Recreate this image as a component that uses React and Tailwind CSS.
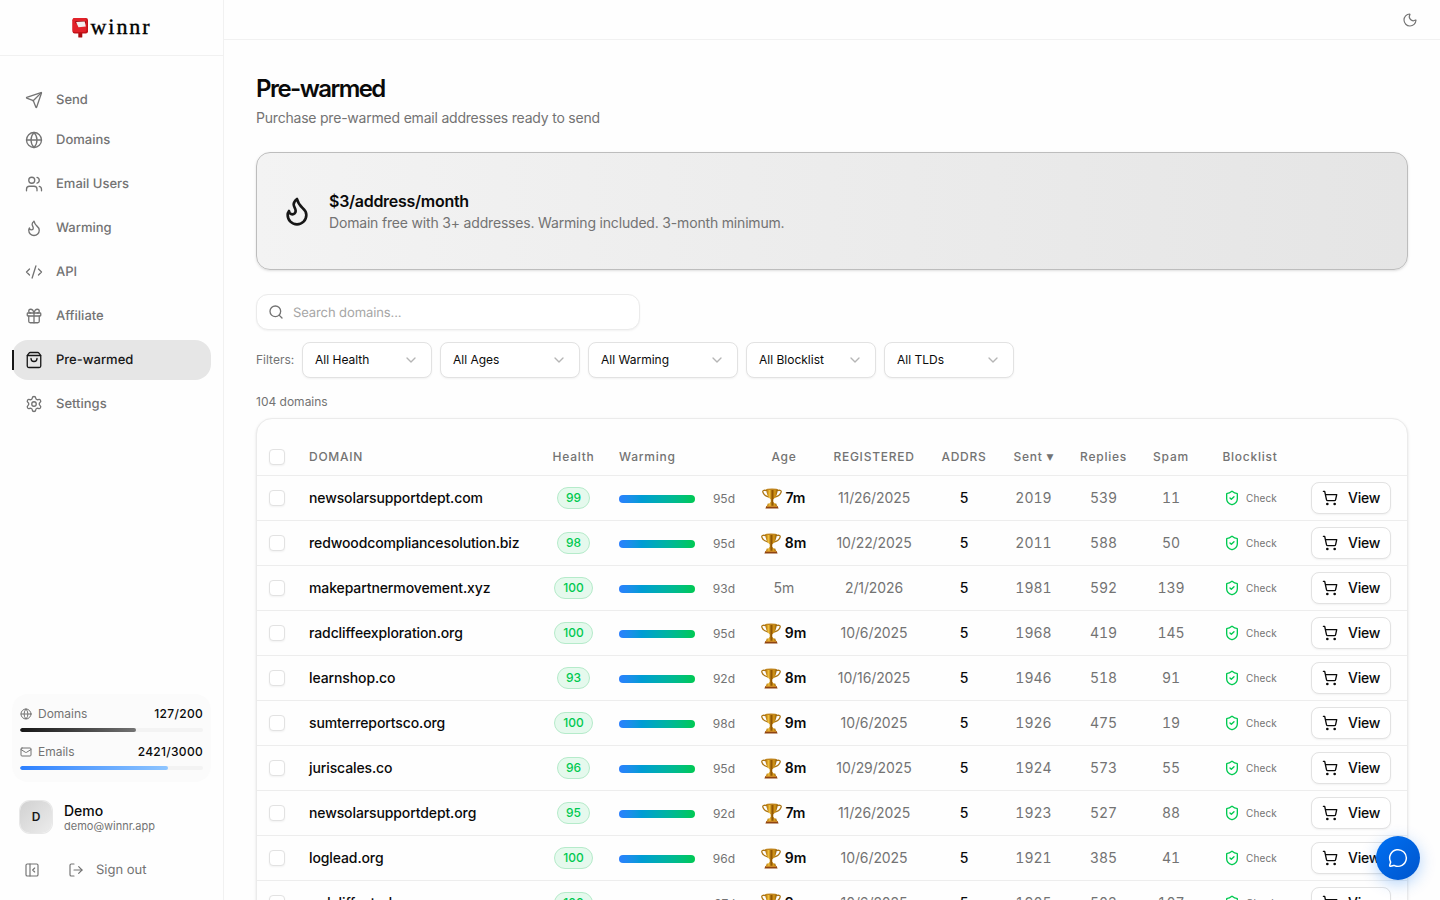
import React from "react";
import {
  Send, Globe, Users, Flame, CodeXml, Gift, ShoppingBag, Settings, Mail,
  PanelLeftClose, LogOut, Moon, Search, ChevronDown, ShieldCheck, ShoppingCart, MessageCircle,
} from "lucide-react";

const nav = [
  { label: "Send", icon: Send, gap: "" },
  { label: "Domains", icon: Globe, gap: "" },
  { label: "Email Users", icon: Users, gap: "mt-1" },
  { label: "Warming", icon: Flame, gap: "mt-1" },
  { label: "API", icon: CodeXml, gap: "mt-1" },
  { label: "Affiliate", icon: Gift, gap: "mt-1" },
  { label: "Pre-warmed", icon: ShoppingBag, gap: "mt-1", active: true },
  { label: "Settings", icon: Settings, gap: "mt-1" },
];

const filters = [
  ["All Health", "w-[130px]"],
  ["All Ages", "w-[140px]"],
  ["All Warming", "w-[150px]"],
  ["All Blocklist", "w-[130px]"],
  ["All TLDs", "w-[130px]"],
];

const rows = [
  ["newsolarsupportdept.com", 99, "95d", "7m", "11/26/2025", 5, 2019, 539, 11],
  ["redwoodcompliancesolution.biz", 98, "95d", "8m", "10/22/2025", 5, 2011, 588, 50],
  ["makepartnermovement.xyz", 100, "93d", "5m", "2/1/2026", 5, 1981, 592, 139],
  ["radcliffeexploration.org", 100, "95d", "9m", "10/6/2025", 5, 1968, 419, 145],
  ["learnshop.co", 93, "92d", "8m", "10/16/2025", 5, 1946, 518, 91],
  ["sumterreportsco.org", 100, "98d", "9m", "10/6/2025", 5, 1926, 475, 19],
  ["juriscales.co", 96, "95d", "8m", "10/29/2025", 5, 1924, 573, 55],
  ["newsolarsupportdept.org", 95, "92d", "7m", "11/26/2025", 5, 1923, 527, 88],
  ["loglead.org", 100, "96d", "9m", "10/6/2025", 5, 1921, 385, 41],
  ["radcliffestud.org", 100, "97d", "9m", "10/6/2025", 5, 1905, 503, 107],
];

const grid =
  "grid grid-cols-[40px_244px_65px_142px_72px_108px_72px_67px_73px_62px_96px_109px] items-center";

function Trophy() {
  return (
    <svg width="20" height="21" viewBox="0 0 20 21" className="-ml-px shrink-0">
      <defs>
        <linearGradient id="cup" x1="0" x2="1" y1="0" y2="0">
          <stop offset="0" stopColor="#a86a05" />
          <stop offset="0.3" stopColor="#f5c33c" />
          <stop offset="0.52" stopColor="#8a4f00" />
          <stop offset="0.75" stopColor="#d89a1a" />
          <stop offset="1" stopColor="#8a5604" />
        </linearGradient>
      </defs>
      <path d="M5 2.600C1.600 1.700.2 2.600 1 4.600c.9 2.300 3.200 4 6.200 4.600M15 2.600c3.400-.9 4.800 0 4 2-.9 2.300-3.200 4-6.200 4.600" fill="none" stroke="#ad7614" strokeWidth="1.300" />
      <path d="M4.300 1h11.400c0 4.600-1.600 8.300-4.400 10.400v2.400l1.600 2.200H7.100l1.600-2.200v-2.400C5.900 9.300 4.300 5.600 4.300 1Z" fill="url(#cup)" />
      <ellipse cx="10" cy="1.300" rx="5.700" ry="0.800" fill="#c0841c" />
      <path d="M5.800 15.600h8.400l.9 2.600H4.900z" fill="url(#cup)" />
      <path d="M4.400 18h11.200l1 2.500H3.400z" fill="#8f4412" />
      <path d="M4.600 17.800h10.800v.9H4.600z" fill="#e5a733" />
    </svg>
  );
}

function Logo() {
  return (
    <div className="flex items-center pb-0.5">
      <svg width="18" height="22" viewBox="0 0 18 22" className="mt-0.5">
        <rect x="6.300" y="14" width="4" height="6.500" rx="0.600" fill="#a90c10" />
        <rect x="0.500" y="1" width="15.500" height="15.400" rx="2.200" fill="#c41218" />
        <rect x="0.500" y="1" width="14" height="14" rx="2" fill="#e2222a" />
        <path d="M3.400 4.200h10.400v2.200H3.400z" fill="#8f0a0e" />
        <path d="m4.100 4.900 8.600-.3 1.100 4.900-7.300.7z" fill="#f4eeee" />
      </svg>
      <span className="ml-px font-['Liberation_Serif',serif] text-[22px] leading-7 tracking-[1.900px] text-black [-webkit-text-stroke:0.400px_black] [text-rendering:geometricPrecision]">
        winnr
      </span>
    </div>
  );
}

function Usage({ icon: Icon, label, value, bar, className }) {
  return (
    <div className={className}>
      <div className="flex h-4 items-center text-xs text-[#737373]">
        <Icon size={12} strokeWidth={2} />
        <span className="ml-1.5">{label}</span>
        <span className="ml-auto font-medium tracking-[0.300px] text-[#0a0a0a]">{value}</span>
      </div>
      <div className="mt-1.5 h-1 overflow-hidden rounded-full bg-[#f3f3f3]">
        <div className={bar} />
      </div>
    </div>
  );
}

function Checkbox() {
  return <div className="ml-3 size-4 rounded-[4px] border border-[#e2e2e2] bg-white shadow-xs" />;
}

function Row({ row }) {
  const [domain, health, days, age, registered, addrs, sent, replies, spam] = row;
  const mature = age !== "5m";
  return (
    <div className={`${grid} h-[45px] border-b border-[#ededed] text-center text-sm text-[#737373]`}>
      <Checkbox />
      <div className="pl-3 text-left font-medium tracking-[-0.110px] text-[#0a0a0a]">{domain}</div>
      <div className="flex justify-center">
        <span className="flex h-[22px] items-center rounded-full border border-[#b5ebca] bg-[#e5f9ed] px-2 text-xs font-medium text-[#00c950]">{health}</span>
      </div>
      <div className="flex items-center pl-[13px]">
        <div className="mt-px h-2 w-[76px] rounded-full bg-linear-to-r from-[#2b7fff] to-[#00c950]" />
        <span className="w-10 pt-px text-right text-xs">{days}</span>
      </div>
      <div className="flex items-center justify-center">
        {mature ? (
          <>
            <Trophy />
            <span className="ml-1 font-semibold text-[#0a0a0a]">{age}</span>
          </>
        ) : (
          age
        )}
      </div>
      <div className="tracking-[-0.100px]">{registered}</div>
      <div className="font-medium text-[#0a0a0a]">{addrs}</div>
      <div className="tabular-nums">{sent}</div>
      <div className="tabular-nums">{replies}</div>
      <div className="tabular-nums">{spam}</div>
      <div className="flex items-center justify-center pl-px">
        <ShieldCheck size={16} strokeWidth={2} className="text-[#00c950]" />
        <span className="ml-1.5 text-[10px] tracking-[0.150px]">Check</span>
      </div>
      <div className="pl-[13px]">
        <div className="flex h-8 w-20 items-center rounded-lg border border-[#e2e2e2] bg-white pl-2.5 font-medium text-[#0a0a0a] shadow-xs">
          <ShoppingCart size={16} strokeWidth={2} />
          <span className="ml-2.5 tracking-[-0.200px]">View</span>
        </div>
      </div>
    </div>
  );
}

export default function App() {
  return (
    <div className="flex h-[900px] w-full overflow-hidden bg-[#fefefe] font-[Inter,sans-serif] text-[#0a0a0a] antialiased">
      <aside className="flex w-56 shrink-0 flex-col border-r border-[#f1f1f1]">
        <div className="flex h-14 shrink-0 items-center justify-center border-b border-[#f1f1f1]">
          <Logo />
        </div>
        <nav className="mt-6 flex flex-col px-3">
          {nav.map(({ label, icon: Icon, gap, active }) => (
            <div
              key={label}
              className={`relative flex h-10 items-center rounded-2xl pl-[13px] text-[13px] font-medium ${gap} ${active ? "bg-[#e6e6e6] text-[#171717]" : "text-[#737373]"}`}
            >
              {active && <span className="absolute top-2.5 left-0 h-5 w-0.5 bg-[#171717]" />}
              <Icon size={18} strokeWidth={1.75} />
              <span className="ml-[13px] pt-px [text-rendering:geometricPrecision]">{label}</span>
            </div>
          ))}
        </nav>
        <div className="mx-3 mt-auto h-[88px] rounded-2xl bg-[#fbfbfb] px-2 pt-3">
          <Usage icon={Globe} label="Domains" value="127/200" bar="h-full w-[63.500%] rounded-full bg-linear-to-r from-[#171717] to-[#737373]" />
          <Usage icon={Mail} label="Emails" value="2421/3000" className="mt-3" bar="h-full w-[80.700%] rounded-full bg-linear-to-r from-[#2b7fff] to-[#8ec5ff]" />
        </div>
        <div className="mt-[19px] flex items-center px-5">
          <div className="flex size-8 items-center justify-center rounded-[10px] bg-linear-to-br from-[#d1d1d1] to-[#ececec] text-xs font-semibold text-[#171717] ring-1 ring-[#e8e8e8]">D</div>
          <div className="ml-3">
            <div className="text-sm leading-[18px] font-medium">Demo</div>
            <div className="text-[11px] leading-[13px] text-[#737373]">demo@winnr.app</div>
          </div>
        </div>
        <div className="mt-[29px] mb-[22px] flex h-4 items-center pl-6 text-[13px] text-[#737373]">
          <PanelLeftClose size={16} strokeWidth={1.75} />
          <LogOut size={16} strokeWidth={1.75} className="ml-7" />
          <span className="ml-3 pt-0.5 [text-rendering:geometricPrecision]">Sign out</span>
        </div>
      </aside>
      <div className="flex min-w-0 flex-1 flex-col">
        <header className="flex h-10 shrink-0 items-center justify-end border-b border-[#f1f1f1] pr-[22px] text-[#737373]">
          <Moon size={16} strokeWidth={1.75} />
        </header>
        <main className="flex-1 overflow-hidden px-8 pt-8">
          <h1 className="text-2xl leading-[34px] font-semibold tracking-[-1.550px]">Pre-warmed</h1>
          <p className="mt-0.5 text-sm tracking-[-0.210px] text-[#737373]">Purchase pre-warmed email addresses ready to send</p>
          <section className="mt-6 flex h-[118px] items-center rounded-[14px] border border-[#bdbdbd] bg-linear-to-r from-[#f3f3f3] to-[#e5e5e5] pl-6 shadow-sm">
            <Flame size={32} strokeWidth={2} className="text-[#171717]" />
            <div className="ml-4">
              <div className="text-base leading-6 font-semibold tracking-[-0.280px]">$3/address/month</div>
              <div className="text-sm tracking-[-0.180px] text-[#737373]">Domain free with 3+ addresses. Warming included. 3-month minimum.</div>
            </div>
          </section>
          <div className="mt-6 flex h-9 w-96 items-center rounded-xl border border-[#ebebeb] bg-white pl-[11px] text-[13px] shadow-xs">
            <Search size={16} strokeWidth={2} className="text-[#737373]" />
            <span className="ml-[9px] pt-[3px] tracking-[-0.100px] text-[#a6a6a6] [text-rendering:geometricPrecision]">Search domains...</span>
          </div>
          <div className="mt-3 flex items-center gap-2 text-xs">
            <span className="w-[38px] whitespace-nowrap text-[#737373]">Filters:</span>
            {filters.map(([label, width]) => (
              <div key={label} className={`flex h-9 items-center justify-between rounded-lg border border-[#e2e2e2] bg-white pr-3 pl-3 shadow-xs ${width}`}>
                <span>{label}</span>
                <ChevronDown size={16} strokeWidth={2} className="text-[#b5b5b5]" />
              </div>
            ))}
          </div>
          <div className="mt-4 text-xs text-[#737373]">104 domains</div>
          <div className="mt-2 h-[700px] rounded-2xl border border-[#ebebeb] bg-[#fefefe] shadow-sm">
            <div className={`${grid} h-[57px] border-b border-[#ededed] pt-5 text-center text-xs font-medium tracking-[0.750px] text-[#737373]`}>
              <Checkbox />
              <div className="pl-3 text-left">DOMAIN</div>
              <div>Health</div>
              <div className="pl-[13px] text-left">Warming</div>
              <div>Age</div>
              <div>REGISTERED</div>
              <div>ADDRS</div>
              <div className="whitespace-nowrap">Sent <span className="relative -top-px font-['DejaVu_Sans',sans-serif] text-[9px] tracking-normal">▼</span></div>
              <div>Replies</div>
              <div>Spam</div>
              <div>Blocklist</div>
              <div />
            </div>
            {rows.map((row) => (
              <Row key={row[0]} row={row} />
            ))}
          </div>
        </main>
      </div>
      <button className="fixed right-5 bottom-5 flex size-11 items-center justify-center rounded-full bg-linear-to-br from-[#0070f3] to-[#0055cc] text-white shadow-[0_4px_16px_rgba(0,112,243,0.300)]">
        <MessageCircle size={20} strokeWidth={1.75} />
      </button>
    </div>
  );
}
